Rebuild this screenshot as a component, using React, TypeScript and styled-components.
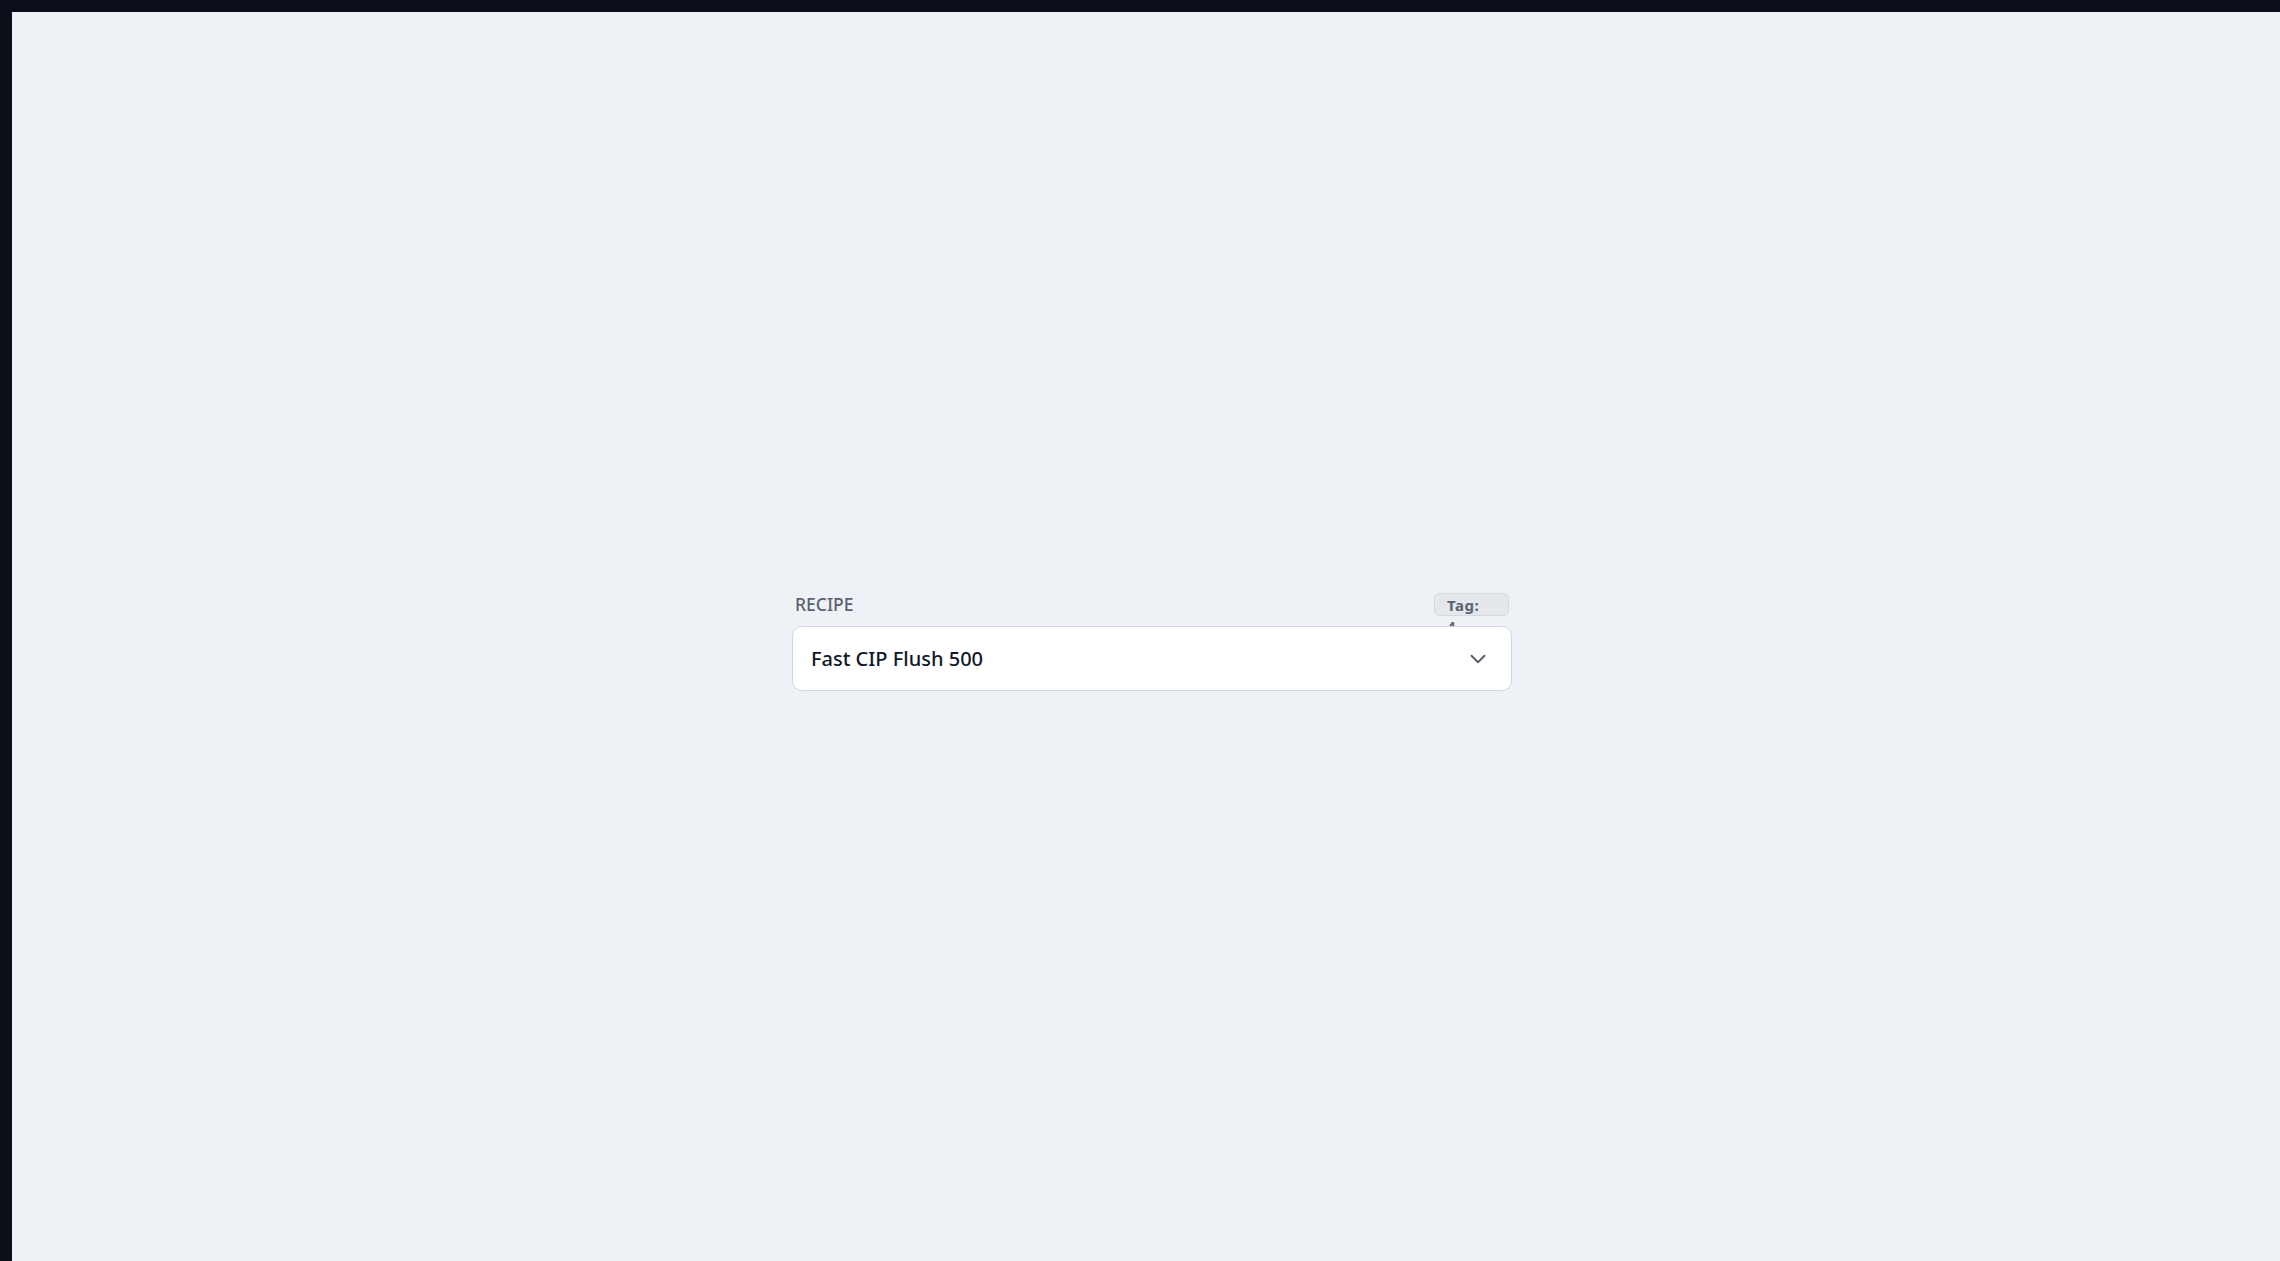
import { FC } from 'react';
import styled, { createGlobalStyle } from 'styled-components';
import { ChevronDown } from 'lucide-react';

const GlobalStyle = createGlobalStyle`
    html, body {
        margin: 0;
        padding: 0;
        height: 100%;
        background: #0b0f19;
        font-family: 'Noto Sans', 'Open Sans', sans-serif;
    }
    #root {
        height: 100%;
    }
`;

const recipe = {
    name: 'Fast CIP Flush 500',
    tag: 4,
};

const App: FC = () => {
    return (
        <>
            <GlobalStyle />
            <Panel>
                <Field>
                    <LabelRow>
                        <Label>Recipe</Label>
                        <TagBadge>
                            <TagText>Tag: {recipe.tag}</TagText>
                        </TagBadge>
                    </LabelRow>
                    <SelectBox>
                        <Value>{recipe.name}</Value>
                        <ChevronDown size={26} strokeWidth={1.7} />
                    </SelectBox>
                </Field>
            </Panel>
        </>
    );
};

const Panel = styled.div`
    box-sizing: border-box;
    margin: 12px 0 0 12px;
    height: calc(100% - 12px);
    background: #eef2f6;
    display: flex;
    align-items: center;
    justify-content: center;
    padding: 10px 0 0 12px;
`;

const Field = styled.div`
    width: 720px;
    display: flex;
    flex-direction: column;
    gap: 10px;
`;

const LabelRow = styled.div`
    display: flex;
    align-items: center;
    justify-content: space-between;
    padding-left: 3px;
`;

const Label = styled.span`
    font-size: 17.5px;
    font-weight: 500;
    text-transform: uppercase;
    color: #5b6270;
`;

const TagBadge = styled.div`
    box-sizing: border-box;
    width: 75px;
    height: 23px;
    margin-right: 3px;
    padding: 1px 12px 0;
    border: 1px solid #d4d8de;
    border-radius: 6px;
    background: #e4e7ec;
`;

const TagText = styled.span`
    display: block;
    width: min-content;
    font-size: 15px;
    font-weight: 700;
    line-height: 21px;
    letter-spacing: 0.5px;
    color: #5b6270;
`;

const SelectBox = styled.div`
    position: relative;
    box-sizing: border-box;
    height: 65px;
    display: flex;
    align-items: center;
    justify-content: space-between;
    padding: 0 20px 0 18px;
    background: #ffffff;
    border: 1px solid #d3d7dd;
    border-radius: 10px;
    color: #555b66;
`;

const Value = styled.span`
    font-size: 20px;
    font-weight: 500;
    color: #111827;
`;

export default App;
